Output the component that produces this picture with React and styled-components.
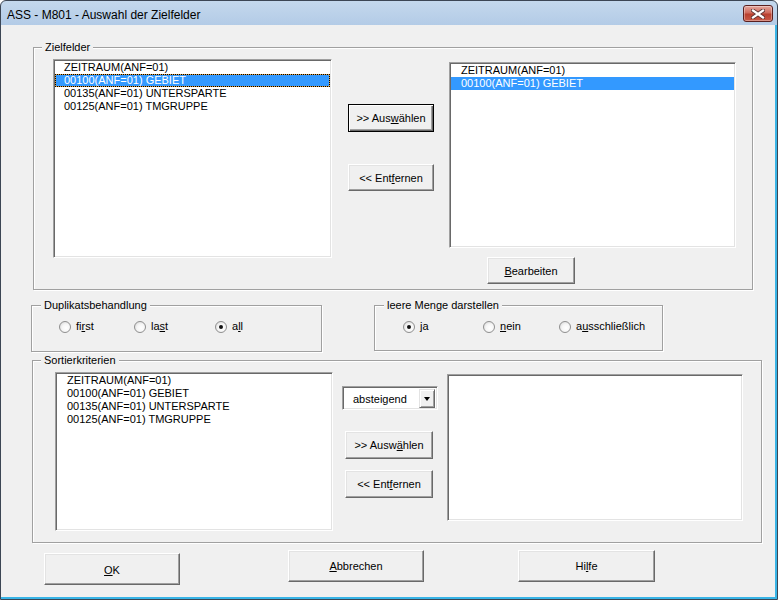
import React from "react";
import styled, { createGlobalStyle } from "styled-components";

const GlobalStyle = createGlobalStyle`
  html, body { margin: 0; padding: 0; background: #fff; }
  body {
    font-family: "Liberation Sans", Arial, sans-serif;
    font-size: 11px;
    color: #000;
  }
`;

const Window = styled.div`
  width: 778px;
  height: 600px;
  box-sizing: border-box;
  border: 1px solid #3c4654;
  border-radius: 6px 6px 0 0;
  overflow: hidden;
  display: flex;
  flex-direction: column;
  background: linear-gradient(#c4d8ed, #a8c3e2 40px);
`;

const TitleBar = styled.div`
  height: 24px;
  flex-shrink: 0;
  display: flex;
  align-items: center;
  justify-content: space-between;
  padding: 0 4px 0 6px;
  font-size: 12px;
`;

const TitleText = styled.span`
  padding-top: 3px;
`;

const CloseButton = styled.div`
  width: 30px;
  height: 17px;
  margin-top: 1px;
  box-sizing: border-box;
  border: 1px solid #5a2020;
  border-radius: 3px;
  background: linear-gradient(#e4a89f, #cf6a5c 45%, #b9402f 55%, #c95a48);
  box-shadow: inset 0 0 0 1px rgba(255, 255, 255, 0.35);
  display: flex;
  align-items: center;
  justify-content: center;
`;

const Client = styled.div`
  flex: 1;
  background: #f0f0f0;
  border-right: 2px solid #38b4e6;
  border-bottom: 2px solid #38b4e6;
  display: flex;
  flex-direction: column;
`;

const Group = styled.div`
  position: relative;
  box-sizing: border-box;
  width: ${(p) => p.$w}px;
  height: ${(p) => p.$h}px;
  margin: ${(p) => p.$m};
  padding: ${(p) => p.$pad || "0"};
  border: 1px solid #a0a0a0;
  box-shadow: inset 1px 1px 0 #fff, 1px 1px 0 #fff;
`;

const Caption = styled.span`
  position: absolute;
  top: -7px;
  left: ${(p) => p.$x}px;
  padding: 0 3px;
  line-height: 13px;
  background: #f0f0f0;
`;

const Row = styled.div`
  display: flex;
  align-items: flex-start;
  margin: ${(p) => p.$m || "0"};
`;

const Column = styled.div`
  display: flex;
  flex-direction: column;
  align-items: flex-start;
  margin: ${(p) => p.$m || "0"};
`;

const ListBox = styled.div`
  box-sizing: border-box;
  width: ${(p) => p.$w}px;
  height: ${(p) => p.$h}px;
  margin: ${(p) => p.$m || "0"};
  flex-shrink: 0;
  background: #fff;
  border: 1px solid;
  border-color: #a0a0a0 #fff #fff #a0a0a0;
  box-shadow: inset 1px 1px 0 #696969, inset -1px -1px 0 #e3e3e3;
  padding: 1px;
  overflow: hidden;
`;

const ListItem = styled.div`
  height: 13px;
  line-height: 13px;
  padding-left: ${(p) => p.$indent}px;
  white-space: nowrap;
  box-sizing: border-box;
  ${(p) =>
    p.$selected &&
    `
    background: #3399ff;
    color: #fff;
  `}
  ${(p) =>
    p.$focus &&
    `
    border: 1px solid #e0a040;
    outline: 1px dotted #000;
    outline-offset: -1px;
    line-height: 11px;
    padding-left: ${p.$indent - 1}px;
  `}
`;

const Button = styled.div`
  box-sizing: border-box;
  width: ${(p) => p.$w}px;
  height: ${(p) => p.$h}px;
  margin: ${(p) => p.$m || "0"};
  flex-shrink: 0;
  display: flex;
  align-items: center;
  justify-content: center;
  background: #f0f0f0;
  border: 1px solid;
  border-color: ${(p) => (p.$default ? "#000" : "#fff #696969 #696969 #fff")};
  box-shadow: ${(p) =>
    p.$default
      ? "inset 1px 1px 0 #fff, inset -1px -1px 0 #696969, inset -2px -2px 0 #a0a0a0"
      : "inset -1px -1px 0 #a0a0a0, inset 1px 1px 0 #e3e3e3"};
  padding-top: ${(p) => p.$dy || 0}px;
  white-space: nowrap;
`;

const RadioRow = styled.div`
  display: flex;
  align-items: center;
  padding: 14px 0 0 ${(p) => p.$x}px;
`;

const RadioItem = styled.label`
  display: flex;
  align-items: center;
  gap: 5px;
  width: ${(p) => (p.$w ? `${p.$w}px` : "auto")};
  line-height: 13px;
`;

const RadioDot = styled.span`
  position: relative;
  width: 12px;
  height: 12px;
  box-sizing: border-box;
  border-radius: 50%;
  border: 1px solid #8f8f8f;
  background: radial-gradient(circle at 60% 60%, #fff 0%, #f6f6f6 45%, #cfcfcf 100%);
  &::after {
    content: "";
    position: absolute;
    left: 3px;
    top: 3px;
    width: 4px;
    height: 4px;
    border-radius: 50%;
    background: ${(p) => (p.$on ? "#111" : "transparent")};
  }
`;

const Combo = styled.div`
  box-sizing: border-box;
  width: 96px;
  height: 24px;
  display: flex;
  align-items: center;
  background: #fff;
  border: 1px solid;
  border-color: #a0a0a0 #fff #fff #a0a0a0;
  box-shadow: inset 1px 1px 0 #696969, inset -1px -1px 0 #e3e3e3;
  padding: 2px 2px 1px 0;
`;

const ComboText = styled.span`
  flex: 1;
  padding-left: 10px;
`;

const ComboArrow = styled.span`
  width: 16px;
  height: 19px;
  box-sizing: border-box;
  background: #f0f0f0;
  border: 1px solid;
  border-color: #e3e3e3 #696969 #696969 #e3e3e3;
  box-shadow: inset 1px 1px 0 #fff, inset -1px -1px 0 #a0a0a0;
  display: flex;
  align-items: center;
  justify-content: center;
  &::after {
    content: "";
    border-left: 3.5px solid transparent;
    border-right: 3.5px solid transparent;
    border-top: 4px solid #000;
  }
`;

const fields = [
  "ZEITRAUM(ANF=01)",
  "00100(ANF=01) GEBIET",
  "00135(ANF=01) UNTERSPARTE",
  "00125(ANF=01) TMGRUPPE",
];

const CloseIcon = () => (
  <svg width="14" height="10" viewBox="0 0 14 10">
    <path d="M2 1.5 L12 8.5 M12 1.5 L2 8.5" stroke="#5d3434" strokeWidth="4" strokeLinecap="square" />
    <path d="M2 1.5 L12 8.5 M12 1.5 L2 8.5" stroke="#fff" strokeWidth="2.2" strokeLinecap="square" />
  </svg>
);

const Radio = ({ w, on, children }) => (
  <RadioItem $w={w}>
    <RadioDot $on={on} />
    <span>{children}</span>
  </RadioItem>
);

export default function App() {
  return (
    <>
      <GlobalStyle />
      <Window>
        <TitleBar>
          <TitleText>ASS - M801 - Auswahl der Zielfelder</TitleText>
          <CloseButton>
            <CloseIcon />
          </CloseButton>
        </TitleBar>
        <Client>
          <Group $w={720} $h={243} $m="22px 0 0 32px" $pad="11px 0 0 19px">
            <Caption $x={8}>Zielfelder</Caption>
            <Row>
              <ListBox $w={279} $h={199}>
                {fields.map((f, i) => (
                  <ListItem key={f} $indent={9} $selected={i === 1} $focus={i === 1}>
                    {f}
                  </ListItem>
                ))}
              </ListBox>
              <Column $m="45px 0 0 16px">
                <Button $w={86} $h={28} $default>
                  &gt;&gt; Aus<u>w</u>ählen
                </Button>
                <Button $w={86} $h={27} $m="32px 0 0 0">
                  &lt;&lt; Ent<u>f</u>ernen
                </Button>
              </Column>
              <Column $m="3px 0 0 15px">
                <ListBox $w={287} $h={186}>
                  {fields.slice(0, 2).map((f, i) => (
                    <ListItem key={f} $indent={10} $selected={i === 1}>
                      {f}
                    </ListItem>
                  ))}
                </ListBox>
                <Button $w={88} $h={27} $m="9px 0 0 38px">
                  <u>B</u>earbeiten
                </Button>
              </Column>
            </Row>
          </Group>

          <Row $m="15px 0 0 30px">
            <Group $w={291} $h={47}>
              <Caption $x={9}>Duplikatsbehandlung</Caption>
              <RadioRow $x={27}>
                <Radio w={75}>
                  fi<u>r</u>st
                </Radio>
                <Radio w={81}>
                  la<u>s</u>t
                </Radio>
                <Radio on>
                  a<u>l</u>l
                </Radio>
              </RadioRow>
            </Group>
            <Group $w={289} $h={46} $m="0 0 0 52px">
              <Caption $x={9}>leere Menge darstellen</Caption>
              <RadioRow $x={28}>
                <Radio w={80} on>
                  <u>j</u>a
                </Radio>
                <Radio w={76}>
                  <u>n</u>ein
                </Radio>
                <Radio>
                  a<u>u</u>sschließlich
                </Radio>
              </RadioRow>
            </Group>
          </Row>

          <Group $w={730} $h={183} $m="8px 0 0 31px" $pad="11px 0 0 22px">
            <Caption $x={8}>Sortierkriterien</Caption>
            <Row>
              <ListBox $w={278} $h={159}>
                {fields.map((f) => (
                  <ListItem key={f} $indent={10}>
                    {f}
                  </ListItem>
                ))}
              </ListBox>
              <Column $m="14px 0 0 9px">
                <Combo>
                  <ComboText>absteigend</ComboText>
                  <ComboArrow />
                </Combo>
                <Button $w={88} $h={28} $m="21px 0 0 3px">
                  &gt;&gt; Ausw<u>ä</u>hlen
                </Button>
                <Button $w={88} $h={28} $m="11px 0 0 3px">
                  &lt;&lt; Ent<u>f</u>ernen
                </Button>
              </Column>
              <ListBox $w={296} $h={147} $m="2px 0 0 9px" />
            </Row>
          </Group>

          <Row $m="7px 0 0 0">
            <Button $w={136} $h={32} $m="3px 0 0 43px" $dy={2}>
              <u>O</u>K
            </Button>
            <Button $w={136} $h={32} $m="0 0 0 108px">
              <u>A</u>bbrechen
            </Button>
            <Button $w={137} $h={32} $m="0 0 0 94px">
              Hi<u>l</u>fe
            </Button>
          </Row>
        </Client>
      </Window>
    </>
  );
}
